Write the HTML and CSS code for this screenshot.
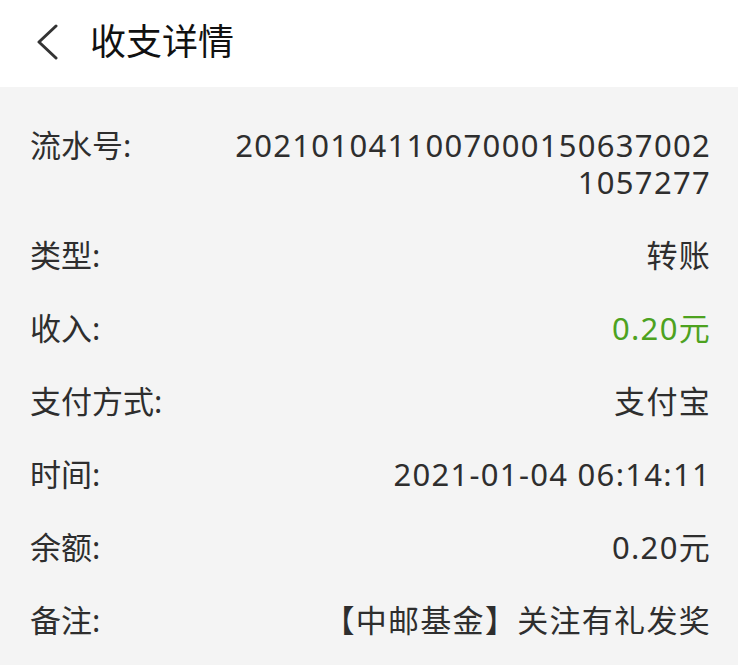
FILE: index.html
```html
<!DOCTYPE html>
<html lang="zh-CN">
<head>
  <meta charset="UTF-8" />
  <meta name="viewport" content="width=device-width, initial-scale=1.0" />
  <title>收支详情</title>
  <link rel="stylesheet" href="styles.css">
</head>
<body>
  <header class="top-bar">
    <button class="back" aria-label="返回">
      <svg width="24" height="36" viewBox="0 0 24 36">
        <path d="M20 2 L3 18 L20 34" fill="none" stroke="#333" stroke-width="3" stroke-linecap="round" stroke-linejoin="round"/>
      </svg>
    </button>
    <h1>收支详情</h1>
  </header>

  <div class="details">
    <div class="row">
      <span class="label">流水号:</span>
      <span class="value serial">20210104110070001506370021057277</span>
    </div>
    <div class="row">
      <span class="label">类型:</span>
      <span class="value">转账</span>
    </div>
    <div class="row">
      <span class="label">收入:</span>
      <span class="value income">0.20元</span>
    </div>
    <div class="row">
      <span class="label">支付方式:</span>
      <span class="value">支付宝</span>
    </div>
    <div class="row">
      <span class="label">时间:</span>
      <span class="value">2021-01-04 06:14:11</span>
    </div>
    <div class="row">
      <span class="label">余额:</span>
      <span class="value">0.20元</span>
    </div>
    <div class="row">
      <span class="label">备注:</span>
      <span class="value">【中邮基金】关注有礼发奖</span>
    </div>
  </div>
</body>
</html>
```

FILE: styles.css
```css
body {
  margin: 0;
  height: 100vh;
  background-color: #f4f4f4;
  color: #2e2e2e;
  font-family: "Noto Sans", "Noto Sans CJK SC", sans-serif;
}

.top-bar {
  display: flex;
  align-items: center;
  height: 87px;
  padding-left: 36px;
  background-color: #fff;
  box-sizing: border-box;
}

.back {
  display: flex;
  align-items: center;
  padding: 0;
  border: none;
  background: none;
  cursor: pointer;
  margin-top: -4px;
}

.top-bar h1 {
  margin: 0 0 0 30px;
  font-size: 36px;
  font-weight: 400;
  color: #111;
  line-height: 1;
  margin-top: -3px;
}

.details {
  padding: 22px 27px 0 30px;
}

.row {
  display: flex;
  justify-content: space-between;
  align-items: flex-start;
  padding: 18px 0;
  font-size: 31px;
  line-height: 37px;
}

.label {
  white-space: nowrap;
}

.value {
  text-align: right;
  letter-spacing: 1.3px;
}

.serial {
  max-width: 480px;
  word-break: break-all;
}

.income {
  color: #4da21f;
}
```
